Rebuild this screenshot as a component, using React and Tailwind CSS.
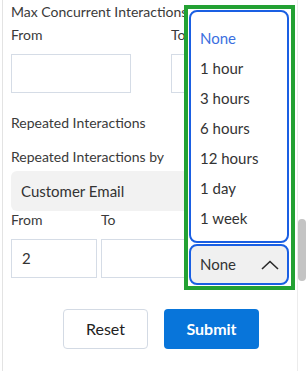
import React from "react";

const timeOptions = ["None", "1 hour", "3 hours", "6 hours", "12 hours", "1 day", "1 week"];

const Field = ({ className, value }) => (
  <div className={`h-[39px] border border-[#d5dce6] bg-white flex items-center pl-[10px] text-[15px] text-[#333] ${className}`}>
    {value}
  </div>
);

const App = () => {
  return (
    <div className="relative w-[308px] h-[371px] overflow-hidden bg-white font-['Lato',sans-serif] text-[#3a3a3a]">
      <div className="h-full ml-[2px] border-l border-[#e3e3e3] pl-[8px] w-[295px]">
        {/* Max Concurrent Interactions */}
        <div className="pt-[2px] text-[14px] leading-[20px]">Max Concurrent Interactions</div>
        <div className="flex mt-[3px] text-[14px] leading-[20px]">
          <div className="w-[160px]">From</div>
          <div>To</div>
        </div>
        <div className="flex mt-[9px]">
          <Field className="w-[120px]" />
          <Field className="w-[120px] ml-[40px]" />
        </div>

        {/* Repeated Interactions */}
        <div className="mt-[20px] text-[14px] leading-[20px]">Repeated Interactions</div>
        <div className="mt-[14px] text-[14px] leading-[20px]">Repeated Interactions by</div>
        <div className="mt-[4px] h-[40px] w-[280px] rounded-md bg-[#f2f2f2] flex items-center pl-[10px] text-[15px] text-[#333]">
          Customer Email
        </div>
        <div className="flex text-[14px] leading-[18px] mt-[0px]">
          <div className="w-[90px]">From</div>
          <div>To</div>
        </div>
        <div className="flex gap-[4px] mt-[10px]">
          <Field className="w-[86px]" value="2" />
          <Field className="w-[86px]" />
        </div>

        {/* Actions */}
        <div className="flex gap-[16px] ml-[52px] mt-[31px]">
          <button className="w-[85px] h-[40px] rounded-[4px] border border-[#d3dae4] bg-white text-[16px] text-[#222]">
            Reset
          </button>
          <button className="w-[95px] h-[40px] rounded-[4px] bg-[#0875da] text-[16px] font-bold text-white">
            Submit
          </button>
        </div>
      </div>

      {/* Scrollbar */}
      <div className="absolute top-0 left-[297px] w-[11px] h-full border-l border-[#ececec]">
        <div className="absolute top-[219px] left-0 w-[8px] h-[62px] rounded-full bg-[#c4c4c4]" />
      </div>

      {/* Open time-window dropdown, highlighted */}
      <div className="absolute left-[184px] top-[5px] w-[111px] h-[285px] border-[4px] border-[#23a133] bg-white pl-[1px] pr-[2px] pt-[1px] flex flex-col">
        <div className="h-[233px] border-2 border-[#1a5fe3] rounded-[8px] bg-white pt-[11px]">
          {timeOptions.map((opt, i) => (
            <div
              key={opt}
              className={`h-[30px] flex items-center pl-[9px] text-[15px] ${i === 0 ? "text-[#3b6fe0]" : "text-[#333]"}`}
            >
              {opt}
            </div>
          ))}
        </div>
        <div className="mt-[1px] h-[41px] border-2 border-[#1a5fe3] rounded-[8px] bg-[#f0f0f0] flex items-center justify-between pl-[9px] pr-[8px] text-[15px] text-[#333]">
          <span>None</span>
          <svg width="18" height="10" viewBox="0 0 18 10" fill="none">
            <path d="M1 9 L9 1.5 L17 9" stroke="#2a2a2a" strokeWidth="1.6" />
          </svg>
        </div>
      </div>
    </div>
  );
};

export default App;
